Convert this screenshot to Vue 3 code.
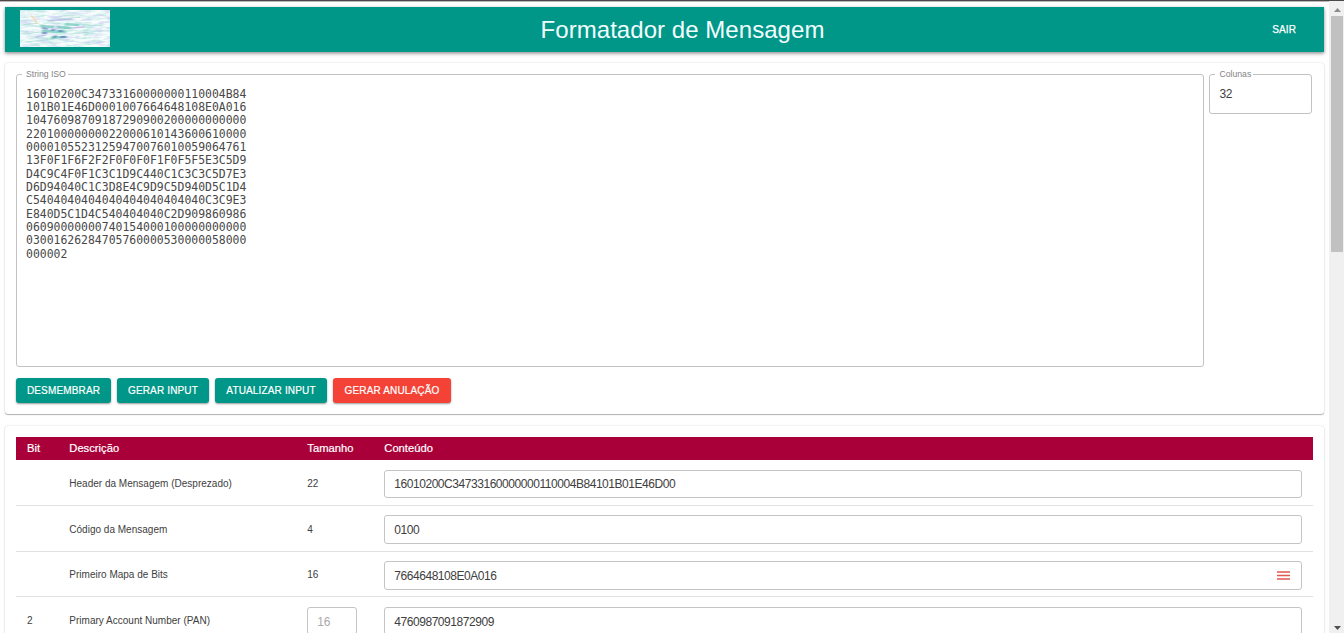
<script setup>
const message = [
  '16010200C34733160000000110004B84',
  '101B01E46D0001007664648108E0A016',
  '10476098709187290900200000000000',
  '22010000000022000610143600610000',
  '00001055231259470076010059064761',
  '13F0F1F6F2F2F0F0F0F1F0F5F5E3C5D9',
  'D4C9C4F0F1C3C1D9C440C1C3C3C5D7E3',
  'D6D94040C1C3D8E4C9D9C5D940D5C1D4',
  'C5404040404040404040404040C3C9E3',
  'E840D5C1D4C540404040C2D909860986',
  '06090000000740154000100000000000',
  '03001626284705760000530000058000',
  '000002',
].join('\n')

const actions = [
  { id: 'split', label: 'Desmembrar' },
  { id: 'generate', label: 'Gerar Input' },
  { id: 'update', label: 'Atualizar Input' },
  { id: 'cancel', label: 'Gerar Anulação', danger: true },
]

const rows = [
  { bit: '', name: 'Header da Mensagem (Desprezado)', size: '22', value: '16010200C34733160000000110004B84101B01E46D00' },
  { bit: '', name: 'Código da Mensagem', size: '4', value: '0100' },
  { bit: '', name: 'Primeiro Mapa de Bits', size: '16', value: '7664648108E0A016', menu: true },
  { bit: '2', name: 'Primary Account Number (PAN)', size: '16', value: '4760987091872909', boxed: true },
]
</script>

<template>
  <div class="window">
    <main class="page">
      <header class="bar">
        <svg class="logo" viewBox="0 0 90 37" preserveAspectRatio="none">
          <defs>
            <filter id="soft" x="-20%" y="-50%" width="140%" height="200%"><feGaussianBlur stdDeviation="1 0.6" /></filter>
            <filter id="grain" x="0" y="0" width="100%" height="100%">
              <feTurbulence type="fractalNoise" baseFrequency="0.08 0.4" numOctaves="4" seed="8" />
              <feColorMatrix values="0 0 0 0 0.5  0 0 0 0 0.82  0 0 0 0 0.76  3 0 0 0 -1.3" />
            </filter>
            <filter id="lilac" x="0" y="0" width="100%" height="100%">
              <feTurbulence type="fractalNoise" baseFrequency="0.07 0.35" numOctaves="4" seed="21" />
              <feColorMatrix values="0 0 0 0 0.62  0 0 0 0 0.66  0 0 0 0 0.88  3 0 0 0 -1.45" />
            </filter>
          </defs>
          <rect width="90" height="37" fill="#f7fcfd" />
          <rect width="90" height="37" filter="url(#grain)" />
          <rect width="90" height="37" filter="url(#lilac)" />
          <g filter="url(#soft)" fill="none">
            <path d="M2 15l17-2M1 24l19-2M5 32l30-3M38 9l22-2M55 14l28 2M49 24l33-3" stroke="#8ed4c6" stroke-width="1.2" opacity=".5" />
            <path d="M20 16l14 1M37 17l14 1M22 21l24 1M31 28l14-1M45 14l14 1" stroke="#5cc0b0" stroke-width="2.6" opacity=".65" />
            <path d="M22 18l6 1M31 20l4 0M38 21l5 0M33 27l4-1M40 27l7 0M22 23l5 0" stroke="#5371b9" stroke-width="2" opacity=".65" />
            <path d="M28 11l25-2M51 18l14-1M15 27l11-2" stroke="#aaa8df" stroke-width="1.3" opacity=".65" />
          </g>
          <path d="M11 6q4 2 5.500 8" fill="none" stroke="#f4d5a2" stroke-width="1.500" opacity=".85" />
        </svg>
        <h1>Formatador de Mensagem</h1>
        <button class="exit">Sair</button>
      </header>

      <section class="card editor">
        <div class="fields">
          <fieldset class="outline iso">
            <legend>String ISO</legend>
            <pre>{{ message }}</pre>
          </fieldset>
          <fieldset class="outline columns">
            <legend>Colunas</legend>
            <span>32</span>
          </fieldset>
        </div>
        <div class="actions">
          <button v-for="a in actions" :key="a.id" :class="['btn', a.id, { danger: a.danger }]">{{ a.label }}</button>
        </div>
      </section>

      <section class="card bits">
        <div class="row head">
          <span>Bit</span><span>Descrição</span><span>Tamanho</span><span>Conteúdo</span>
        </div>
        <div v-for="r in rows" :key="r.name" class="row">
          <span>{{ r.bit }}</span>
          <span>{{ r.name }}</span>
          <div v-if="r.boxed" class="box small">{{ r.size }}</div>
          <span v-else>{{ r.size }}</span>
          <div class="box">
            <span>{{ r.value }}</span>
            <svg v-if="r.menu" width="13" height="9" viewBox="0 0 13 9">
              <path d="M0 1h13M0 4.500h13M0 8h13" stroke="#e05a50" stroke-width="1.700" />
            </svg>
          </div>
        </div>
      </section>
    </main>
    <aside class="scroll">
      <svg width="7" height="4" viewBox="0 0 7 4"><path d="M0 4L3.5 0L7 4z" fill="#8b8b8b" /></svg>
      <i class="thumb"></i>
      <svg class="down" width="7" height="4" viewBox="0 0 7 4"><path d="M0 0h7L3.5 4z" fill="#505050" /></svg>
    </aside>
  </div>
</template>

<style>
body { overflow: hidden; background: #fff; }
</style>

<style scoped>
* { box-sizing: border-box; }
.window {
  display: flex;
  height: 633px;
  border-top: 1px solid #4d484b;
  box-shadow: inset 0 1px #b9b7b8;
  overflow: hidden;
  font-family: "Liberation Sans", Arial, sans-serif;
  color: #404040;
}
.page { flex: 1; padding: 6px 5px 0; min-width: 0; }
button { border: 0; font-family: inherit; text-transform: uppercase; padding: 0; color: #fff; white-space: nowrap; }
.bar {
  display: grid;
  grid-template-columns: 200px 1fr 163px;
  align-items: center;
  height: 45px;
  padding: 0 16px 0 15px;
  background: #009688;
  box-shadow: 0 1px 3px rgba(0,0,0,.3), 0 2px 4px rgba(0,0,0,.2);
}
.logo { width: 90px; height: 37px; margin-top: -2px; }
h1 { margin: 0; font-size: 24px; font-weight: 400; letter-spacing: .05px; text-align: center; color: #f3ffff; line-height: 45px; }
.exit { justify-self: end; background: none; font-size: 10px; letter-spacing: .1px; margin-right: 12px; -webkit-text-stroke: .25px #fff; }
.card { border-radius: 3px; background: #fff; box-shadow: 0 1px 1px rgba(0,0,0,.28), 0 0 2px rgba(0,0,0,.17); padding: 0 11px; }
.editor { margin-top: 11px; height: 351px; padding-top: 6px; }
.fields { display: flex; gap: 5.4px; align-items: flex-start; }
.outline { margin: 0; border: 1px solid #c2c2c2; border-radius: 3px; padding: 0 9px; min-width: 0; }
legend { font-size: 8.7px; line-height: 10px; color: #858585; padding: 0 2px 0 4px; margin-left: -4px; }
.iso { width: 1188px; height: 298px; }
.iso legend { letter-spacing: -.03px; }
.iso pre { margin: 8.6px 0 0; font: 11.44px/13.33px "DejaVu Sans Mono", monospace; color: #484848; }
.columns { width: 103px; height: 45px; font-size: 12px; }
.columns span { display: block; line-height: 14px; margin-top: 8px; letter-spacing: -.2px; }
.actions { display: flex; gap: 6px; margin-top: 11px; }
.btn { height: 25px; font-size: 10px; letter-spacing: .15px; -webkit-text-stroke: .2px #fff; border-radius: 3px; background: #009688; box-shadow: 0 1px 2px rgba(0,0,0,.4); }
.split { width: 95px; }
.generate { width: 92px; }
.update { width: 112px; }
.cancel { width: 118px; }
.danger { background: #f44336; }
.bits { margin-top: 12px; height: 260px; padding: 11px 11.4px 0 11px; }
.row {
  display: grid;
  grid-template-columns: 42.3px 238px 77px 1fr;
  align-items: center;
  height: 45.75px;
  padding: 2px 11px 0;
  border-bottom: 1px solid #e1e1e1;
  font-size: 10px;
}
.row > span { letter-spacing: .01px; }
.head { height: 23px; padding: 0 11px 1px; background: #a90039; color: #fff; border: 0; font-size: 11.2px; }
.head span { -webkit-text-stroke: .2px #fff; }
.box { display: flex; align-items: center; justify-content: space-between; height: 28.3px; margin-top: 1px; border: 1px solid #c4c4c4; border-radius: 3px; padding: 1px 10.5px 0 9px; font-size: 12px; letter-spacing: -.45px; }
.small { width: 50px; color: #aaa; letter-spacing: -.2px; }
.scroll { width: 15px; background: #f0f0f0; display: flex; flex-direction: column; align-items: center; padding: 7px 1px 3px 2px; }
.scroll svg { flex: none; }
.thumb { width: 12px; height: 236px; background: #c1c1c1; margin-top: 4px; }
.down { margin-top: auto; }
</style>
